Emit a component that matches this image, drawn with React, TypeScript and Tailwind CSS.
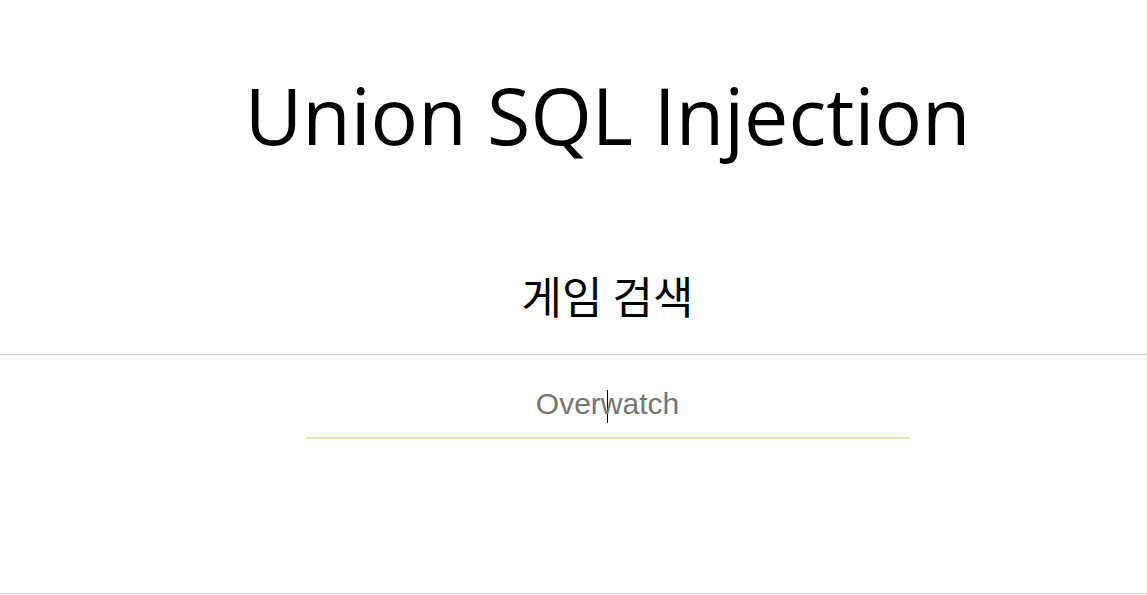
import React from 'react';

const App: React.FC = () => {
  return (
    <div className="w-[1147px] h-[595px] bg-white overflow-hidden flex flex-col">
      {/* Header */}
      <div className="h-[354px] pl-[68px] flex flex-col items-center">
        <h1
          className="mt-[67px] h-[96px] leading-[96px] text-[79px] font-normal text-black"
          style={{ fontFamily: '"Open Sans", "Noto Sans", sans-serif' }}
        >
          Union SQL Injection
        </h1>
        <h2
          className="mt-[106px] h-[52px] leading-[52px] text-[44px] font-normal text-black"
          style={{ fontFamily: '"Noto Sans CJK KR", "Noto Sans", sans-serif' }}
        >
          게임 검색
        </h2>
      </div>

      {/* Search */}
      <div className="h-[240px] border-t border-b border-[#cccccc] pl-[68px] flex flex-col items-center">
        <div className="mt-[24px] w-[604px] h-[60px] border-b-2 border-[#f5deb3] flex items-start justify-center pt-[7px]">
          <div
            className="text-[30px] leading-[36px] text-[#757575]"
            style={{ fontFamily: '"Liberation Sans", Arial, sans-serif' }}
          >
            Over
            <span className="inline-block w-px h-[33px] bg-black align-middle ml-[6px] -mr-[7px]" />
            watch
          </div>
        </div>
      </div>
    </div>
  );
};

export default App;
